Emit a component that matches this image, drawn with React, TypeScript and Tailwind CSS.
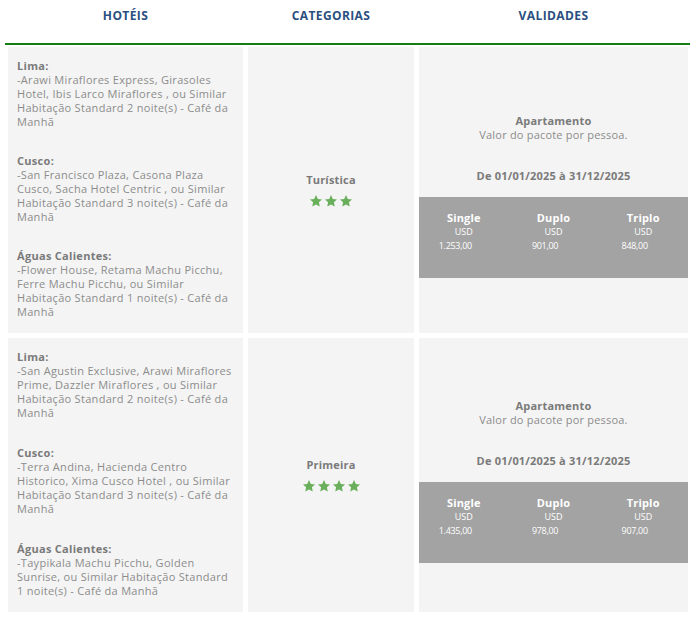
import { ReactNode } from "react";

type Block = { city: string; lines: string[] };

type Row = {
  blocks: Block[];
  category: string;
  stars: number;
  prices: [string, string, string];
  gap: string;
};

const rows: Row[] = [
  {
    blocks: [
      {
        city: "Lima:",
        lines: [
          "-Arawi Miraflores Express, Girasoles",
          "Hotel, Ibis Larco Miraflores , ou Similar",
          "Habitação Standard 2 noite(s) - Café da",
          "Manhã",
        ],
      },
      {
        city: "Cusco:",
        lines: [
          "-San Francisco Plaza, Casona Plaza",
          "Cusco, Sacha Hotel Centric , ou Similar",
          "Habitação Standard 3 noite(s) - Café da",
          "Manhã",
        ],
      },
      {
        city: "Águas Calientes:",
        lines: [
          "-Flower House, Retama Machu Picchu,",
          "Ferre Machu Picchu, ou Similar",
          "Habitação Standard 1 noite(s) - Café da",
          "Manhã",
        ],
      },
    ],
    category: "Turística",
    stars: 3,
    prices: ["1.253,00", "901,00", "848,00"],
    gap: "mt-[25px]",
  },
  {
    blocks: [
      {
        city: "Lima:",
        lines: [
          "-San Agustin Exclusive, Arawi Miraflores",
          "Prime, Dazzler Miraflores , ou Similar",
          "Habitação Standard 2 noite(s) - Café da",
          "Manhã",
        ],
      },
      {
        city: "Cusco:",
        lines: [
          "-Terra Andina, Hacienda Centro",
          "Historico, Xima Cusco Hotel , ou Similar",
          "Habitação Standard 3 noite(s) - Café da",
          "Manhã",
        ],
      },
      {
        city: "Águas Calientes:",
        lines: [
          "-Taypikala Machu Picchu, Golden",
          "Sunrise, ou Similar Habitação Standard",
          "1 noite(s) - Café da Manhã",
        ],
      },
    ],
    category: "Primeira",
    stars: 4,
    prices: ["1.435,00", "978,00", "907,00"],
    gap: "mt-[26px]",
  },
];

function Star() {
  return (
    <svg viewBox="0 0 24 24" className="w-[14px] h-[14px] fill-[#6aaf5c]">
      <path d="M12 1.8l3.1 6.6 7.2.9-5.3 5 1.4 7.1L12 17.9l-6.4 3.5 1.4-7.1-5.3-5 7.2-.9z" />
    </svg>
  );
}

function Cell({ className, children }: { className: string; children: ReactNode }) {
  return <div className={"bg-[#f4f4f4] " + className}>{children}</div>;
}

function TableRow({ row }: { row: Row }) {
  const labels = ["Single", "Duplo", "Triplo"];
  return (
    <div className="flex gap-[5px]">
      <Cell className="w-[235px] pl-[9px] pt-[12px] pb-[14px] text-[11px] leading-[14px] tracking-[0.3px] text-[#8c8c8c]">
        {row.blocks.map((b, i) => (
          <div key={b.city} className={i > 0 ? row.gap : ""}>
            <div className="font-bold text-[#7a7a7a]">{b.city}</div>
            {b.lines.map((l) => (
              <div key={l} className="whitespace-nowrap">
                {l}
              </div>
            ))}
          </div>
        ))}
      </Cell>

      <Cell className="w-[166px] flex flex-col items-center justify-center">
        <div className="text-[11px] leading-[14px] font-bold tracking-[0.2px] text-[#7a7a7a]">{row.category}</div>
        <div className="flex gap-[1px] mt-[7px]">
          {Array.from({ length: row.stars }).map((_, i) => (
            <Star key={i} />
          ))}
        </div>
      </Cell>

      <Cell className="w-[269px] flex flex-col justify-center pt-[12px]">
        <div className="text-center text-[11px] leading-[14px] tracking-[0.2px] text-[#8c8c8c]">
          <div className="font-bold text-[#7a7a7a]">Apartamento</div>
          <div>Valor do pacote por pessoa.</div>
          <div className="font-bold text-[#7a7a7a] mt-[27px]">De 01/01/2025 à 31/12/2025</div>
        </div>
        <div className="mt-[14px] h-[81px] bg-[#a3a3a3] flex pt-[14px] text-white">
          {labels.map((l, i) => (
            <div key={l} className="flex-1 flex flex-col items-center">
              <div className="text-[11px] leading-[14px] font-bold tracking-[0.2px]">{l}</div>
              <div className="text-[9px] leading-[14px]">USD</div>
              <div className="text-[9px] leading-[14px] tracking-[-0.3px] pr-[17px]">{row.prices[i]}</div>
            </div>
          ))}
        </div>
      </Cell>
    </div>
  );
}

export default function App() {
  return (
    <div className="w-[697px] h-[619px] bg-white font-['Open_Sans',sans-serif]">
      <div className="mx-[5px] w-[685px]">
        <div className="flex h-[45px] border-b-2 border-[#128012] text-[12px] font-bold tracking-[0.4px] text-[#2b4f80] pl-[3px] gap-[5px]">
          <div className="w-[235px] text-center pt-[7px]">HOTÉIS</div>
          <div className="w-[166px] text-center pt-[7px]">CATEGORIAS</div>
          <div className="w-[269px] text-center pt-[7px]">VALIDADES</div>
        </div>
        <div className="flex flex-col gap-[5px] pl-[3px] pt-[2px]">
          {rows.map((r) => (
            <TableRow key={r.category} row={r} />
          ))}
        </div>
      </div>
    </div>
  );
}
